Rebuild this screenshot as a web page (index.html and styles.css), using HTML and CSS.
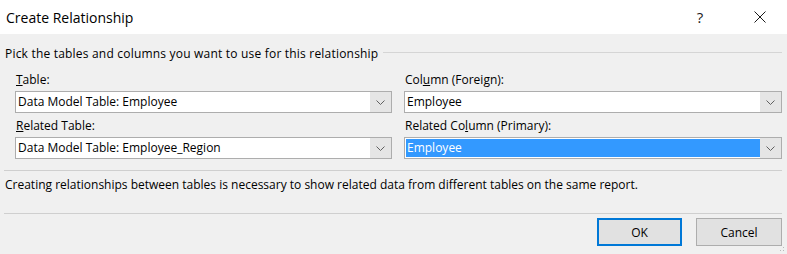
FILE: index.html
```html
<!DOCTYPE html>
<html lang="en">
<head>
    <meta charset="UTF-8">
    <title>Create Relationship</title>
    <link rel="stylesheet" href="styles.css">
</head>
<body>

<div class="dialog">
    <div class="titlebar">
        <span class="title">Create Relationship</span>
        <span class="tb-btn help">?</span>
        <span class="tb-btn close">
            <svg width="12" height="12" viewBox="0 0 12 12"><path d="M0.5 0.5 L11.5 11.5 M11.5 0.5 L0.5 11.5" stroke="#1a1a1a" stroke-width="1" fill="none"/></svg>
        </span>
    </div>

    <div class="body">
        <div class="group-head">
            <span class="group-text">Pick the tables and columns you want to use for this relationship</span>
            <span class="rule"></span>
        </div>

        <div class="fields">
            <div class="field">
                <label><u>T</u>able:</label>
                <div class="combo">
                    <span class="combo-text">Data Model Table: Employee</span>
                    <span class="combo-btn"><svg width="9" height="5" viewBox="0 0 9 5"><path d="M0.5 0.5 L4.5 4.5 L8.5 0.5" stroke="#606060" fill="none"/></svg></span>
                </div>
            </div>
            <div class="field">
                <label>Col<u>u</u>mn (Foreign):</label>
                <div class="combo">
                    <span class="combo-text">Employee</span>
                    <span class="combo-btn"><svg width="9" height="5" viewBox="0 0 9 5"><path d="M0.5 0.5 L4.5 4.5 L8.5 0.5" stroke="#606060" fill="none"/></svg></span>
                </div>
            </div>
            <div class="field">
                <label><u>R</u>elated Table:</label>
                <div class="combo">
                    <span class="combo-text">Data Model Table: Employee_Region</span>
                    <span class="combo-btn"><svg width="9" height="5" viewBox="0 0 9 5"><path d="M0.5 0.5 L4.5 4.5 L8.5 0.5" stroke="#606060" fill="none"/></svg></span>
                </div>
            </div>
            <div class="field">
                <label>Related Co<u>l</u>umn (Primary):</label>
                <div class="combo">
                    <span class="combo-text selected">Employee</span>
                    <span class="combo-btn"><svg width="9" height="5" viewBox="0 0 9 5"><path d="M0.5 0.5 L4.5 4.5 L8.5 0.5" stroke="#606060" fill="none"/></svg></span>
                </div>
            </div>
        </div>

        <div class="note">Creating relationships between tables is necessary to show related data from different tables on the same report.</div>

        <div class="actions">
            <button class="btn default">OK</button>
            <button class="btn">Cancel</button>
        </div>
        <span class="grip"></span>
    </div>
</div>

</body>
</html>
```

FILE: styles.css
```css
body {
    margin: 0;
    font-family: 'Open Sans', 'Noto Sans', sans-serif;
    font-size: 12px;
    color: #000;
    background-color: #F0F0F0;
}

.dialog {
    width: 787px;
    height: 254px;
    background-color: #F0F0F0;
    overflow: hidden;
}

.titlebar {
    height: 34px;
    background-color: white;
    display: flex;
    align-items: center;
    gap: 14px;
    padding-right: 4px;
}

.title {
    flex: 1;
    padding-left: 6px;
    font-size: 14px;
    color: #000;
}

.tb-btn {
    width: 46px;
    height: 34px;
    display: flex;
    justify-content: center;
    align-items: center;
}

.help {
    font-size: 15px;
    color: #1a1a1a;
}

.body {
    position: relative;
    height: 220px;
    padding: 0 5px 0 4px;
}

.group-head {
    display: flex;
    align-items: center;
    height: 34px;
    padding: 2px 0 0 1px;
}

.group-text {
    letter-spacing: 0.2px;
}

.rule {
    flex: 1;
    border-top: 1px solid #D5D5D5;
    margin: 0 0 1px 5px;
}

.fields {
    display: grid;
    grid-template-columns: 377px 378px;
    column-gap: 12px;
    padding-left: 11px;
}

.field label {
    display: block;
    height: 21px;
    line-height: 20px;
    padding-left: 1px;
}

.combo {
    height: 22px;
    box-sizing: border-box;
    border: 1px solid #ADADAD;
    background-color: white;
    display: flex;
    margin-bottom: 3px;
}

.combo-text {
    flex: 1;
    margin: 1px 0 1px 1px;
    padding-left: 1px;
    line-height: 18px;
    white-space: nowrap;
}

.combo-text.selected {
    background-color: #3399FF;
    color: white;
}

.combo-btn {
    width: 21px;
    background-color: #E5E5E5;
    display: flex;
    justify-content: center;
    align-items: center;
}

.note {
    margin-top: 8px;
    border-top: 1px solid #CFCFCF;
    border-bottom: 1px solid #CFCFCF;
    height: 42px;
    line-height: 28px;
    padding-left: 1px;
}

.actions {
    display: flex;
    justify-content: flex-end;
    gap: 14px;
    padding-top: 4px;
}

.btn {
    width: 86px;
    height: 28px;
    font-family: inherit;
    font-size: 12px;
    color: #000;
    background-color: #E1E1E1;
    border: 1px solid #ADADAD;
    padding: 0;
}

.btn.default {
    border: 2px solid #0078D7;
    width: 85px;
}

.grip {
    position: absolute;
    right: 1px;
    bottom: 1px;
    width: 10px;
    height: 10px;
    background-image: radial-gradient(circle, #B8B8B8 1px, transparent 1px);
    background-size: 3px 3px;
    clip-path: polygon(100% 0, 100% 100%, 0 100%);
}
```
